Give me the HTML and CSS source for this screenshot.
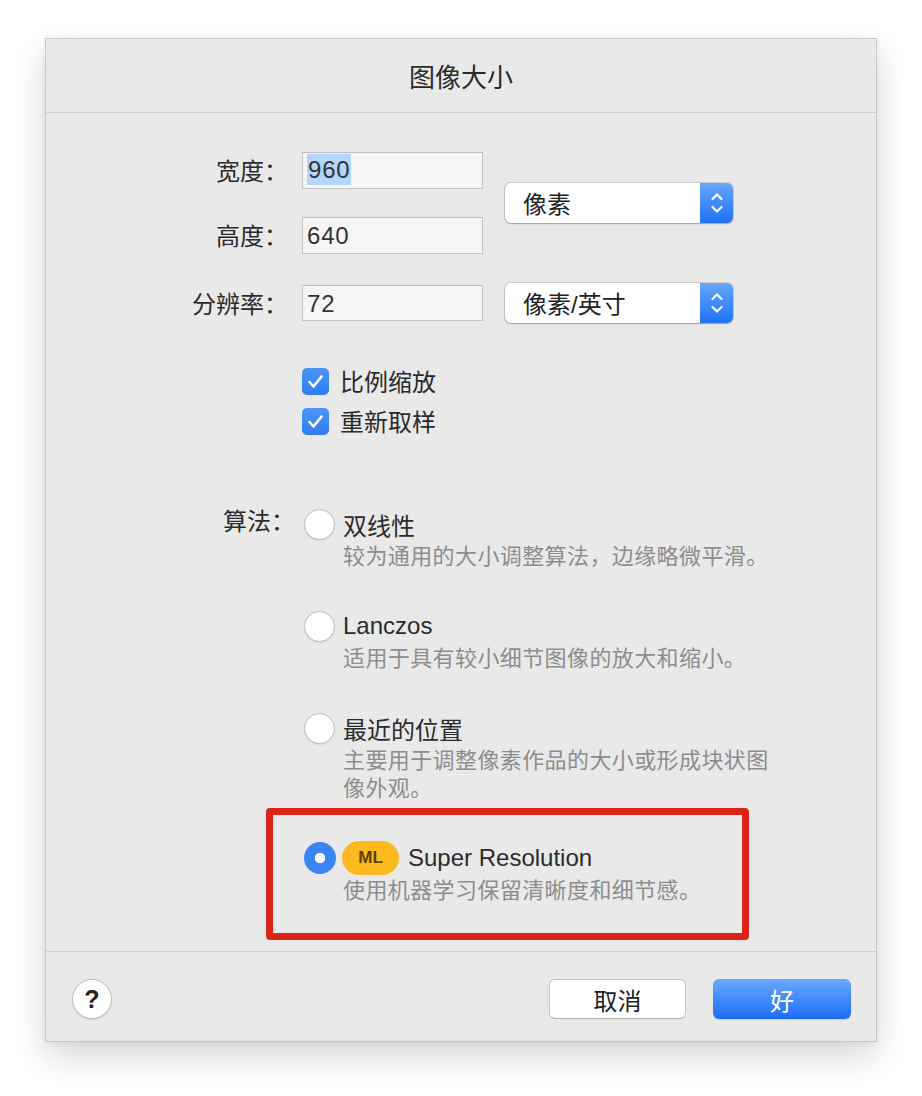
FILE: index.html
```html
<!DOCTYPE html>
<html lang="zh-CN">
<head>
<meta charset="utf-8">
<title>图像大小</title>
<link rel="stylesheet" href="styles.css">
</head>
<body>
<div class="dialog">
  <div class="titlebar">图像大小</div>
  <div class="content">
    <div class="size-grid">
      <div class="label">宽度：</div>
      <div class="field"><span class="sel">960</span></div>
      <div class="popup popup-span">
        <span class="popup-text">像素</span>
        <span class="popup-arrows"><svg width="12" height="22" viewBox="0 0 12 22"><polyline points="1.5,7 6,2.5 10.5,7" /><polyline points="1.5,15 6,19.5 10.5,15" /></svg></span>
      </div>
      <div class="label">高度：</div>
      <div class="field">640</div>
    </div>
    <div class="res-grid">
      <div class="label">分辨率：</div>
      <div class="field">72</div>
      <div class="popup">
        <span class="popup-text">像素/英寸</span>
        <span class="popup-arrows"><svg width="12" height="22" viewBox="0 0 12 22"><polyline points="1.5,7 6,2.5 10.5,7" /><polyline points="1.5,15 6,19.5 10.5,15" /></svg></span>
      </div>
    </div>
    <div class="checks">
      <div class="check-row">
        <span class="checkbox"><svg width="17" height="15" viewBox="0 0 17 15"><polyline points="2.5,8 6.5,12.5 14.5,2.5" /></svg></span>
        <span>比例缩放</span>
      </div>
      <div class="check-row">
        <span class="checkbox"><svg width="17" height="15" viewBox="0 0 17 15"><polyline points="2.5,8 6.5,12.5 14.5,2.5" /></svg></span>
        <span>重新取样</span>
      </div>
    </div>
    <div class="algo">
      <div class="label algo-label">算法：</div>
      <div class="options">
        <div class="option">
          <div class="opt-title"><span class="radio"></span><span>双线性</span></div>
          <div class="opt-desc">较为通用的大小调整算法，边缘略微平滑。</div>
        </div>
        <div class="option">
          <div class="opt-title"><span class="radio"></span><span>Lanczos</span></div>
          <div class="opt-desc">适用于具有较小细节图像的放大和缩小。</div>
        </div>
        <div class="option">
          <div class="opt-title"><span class="radio"></span><span>最近的位置</span></div>
          <div class="opt-desc">主要用于调整像素作品的大小或形成块状图像外观。</div>
        </div>
        <div class="option option-ml">
          <div class="opt-title"><span class="radio radio-on"></span><span class="badge">ML</span><span class="ml-name">Super Resolution</span></div>
          <div class="opt-desc">使用机器学习保留清晰度和细节感。</div>
          <div class="highlight"></div>
        </div>
      </div>
    </div>
  </div>
  <div class="footer">
    <div class="help">?</div>
    <div class="buttons">
      <div class="btn btn-cancel">取消</div>
      <div class="btn btn-ok">好</div>
    </div>
  </div>
</div>
</body>
</html>
```
FILE: styles.css
```css
* { box-sizing: border-box; }
html, body { margin: 0; padding: 0; background: #ffffff; }
body {
  font-family: "Liberation Sans", "Noto Sans CJK SC", sans-serif;
  color: #2b2b2b;
  width: 922px;
  height: 1096px;
  overflow: hidden;
}
.dialog {
  margin: 38px 0 0 45px;
  width: 832px;
  background: #e9e9e9;
  border: 1px solid #c8c8c8;
  box-shadow: 0 14px 32px rgba(0,0,0,0.16), 0 2px 6px rgba(0,0,0,0.06);
}
.titlebar {
  height: 74px;
  border-bottom: 1px solid #d2d2d2;
  display: flex;
  align-items: center;
  justify-content: center;
  font-size: 26px;
  color: #2b2b2b;
}
.content {
  padding-top: 39px;
  padding-bottom: 46px;
}
.label {
  font-size: 24px;
  text-align: right;
  padding-right: 14px;
  color: #2b2b2b;
  white-space: nowrap;
  margin-top: -2px;
}
.size-grid {
  display: grid;
  grid-template-columns: 256px 202px 228px;
  grid-template-rows: 37px 37px;
  row-gap: 28px;
  align-items: center;
}
.res-grid {
  margin-top: 29px;
  display: grid;
  grid-template-columns: 256px 202px 228px;
  grid-template-rows: 40px;
  align-items: center;
}
.field {
  width: 181px;
  height: 37px;
  background: #f5f5f5;
  border: 1px solid #c6c6c6;
  border-top-color: #bdbdbd;
  font-size: 24px;
  line-height: 35px;
  padding-left: 4px;
  color: #333;
  letter-spacing: 0.8px;
}
.res-grid .field { height: 36px; line-height: 36px; }
.sel {
  display: inline-block;
  background: #b3d6fe;
  line-height: 31px;
  margin-top: 1px;
  padding: 0 1px;
  vertical-align: top;
}
.popup {
  grid-column: 3;
  height: 40px;
  width: 228px;
  margin-left: 1px;
  background: #ffffff;
  border-radius: 6px;
  box-shadow: 0 0 0 1px rgba(0,0,0,0.13), 0 1px 1.5px rgba(0,0,0,0.22);
  display: flex;
  align-items: center;
  justify-content: space-between;
  overflow: hidden;
}
.popup-span { grid-row: 1 / span 2; }
.popup-text {
  font-size: 24px;
  padding-left: 18px;
  color: #222;
  margin-top: -2px;
}
.popup-arrows {
  width: 33px;
  height: 40px;
  background: linear-gradient(#66a6fb, #1f72f4);
  display: flex;
  align-items: center;
  justify-content: center;
}
.popup-arrows polyline {
  fill: none;
  stroke: #fff;
  stroke-width: 2.2;
  stroke-linecap: round;
  stroke-linejoin: round;
}
.checks {
  margin-top: 45px;
  padding-left: 256px;
  display: flex;
  flex-direction: column;
  gap: 13px;
}
.check-row {
  display: flex;
  align-items: center;
  height: 27px;
  gap: 11px;
  font-size: 24px;
  color: #2b2b2b;
}
.check-row span:last-child { margin-top: -2px; }
.checkbox {
  width: 27px;
  height: 27px;
  border-radius: 5px;
  background: linear-gradient(#4c94f8, #2f7df1);
  display: flex;
  align-items: center;
  justify-content: center;
}
.checkbox polyline {
  fill: none;
  stroke: #fff;
  stroke-width: 2.6;
  stroke-linecap: round;
  stroke-linejoin: round;
}
.algo {
  margin-top: 73px;
  display: grid;
  grid-template-columns: 256px 1fr;
}
.algo-label {
  line-height: 32px;
  padding-right: 7px;
}
.options {
  padding-left: 2px;
  display: flex;
  flex-direction: column;
  gap: 39px;
}
.option { position: relative; }
.opt-title {
  display: flex;
  align-items: center;
  height: 32px;
  gap: 8px;
  font-size: 24px;
  color: #2b2b2b;
}
.radio {
  width: 31px;
  height: 31px;
  border-radius: 50%;
  background: #ffffff;
  border: 1px solid #bdbdbd;
  box-shadow: 0 1px 1px rgba(0,0,0,0.08);
  flex: none;
}
.radio-on {
  width: 32px;
  height: 32px;
  border: none;
  background: radial-gradient(circle, #ffffff 0 5px, #3b85f2 5.5px);
  box-shadow: none;
}
.badge {
  width: 57px;
  height: 34px;
  border-radius: 17px;
  background: #fbb91e;
  color: #5e3f00;
  font-size: 17px;
  font-weight: bold;
  display: flex;
  align-items: center;
  justify-content: center;
  margin-left: -2px;
}
.ml-name { margin-left: 1px; }
.opt-desc {
  margin-top: 3px;
  padding-left: 39px;
  width: 478px;
  font-size: 22px;
  letter-spacing: 0.4px;
  line-height: 28px;
  color: #8d8d8d;
}
.highlight {
  position: absolute;
  left: -38px;
  top: -34px;
  width: 483px;
  height: 132px;
  border: 7px solid #da241a;
  border-radius: 4px;
}
.footer {
  border-top: 1px solid #d2d2d2;
  height: 90px;
  padding: 27px 25px 0 26px;
  display: flex;
  justify-content: space-between;
  align-items: flex-start;
}
.help {
  width: 40px;
  height: 40px;
  border-radius: 50%;
  background: #ffffff;
  border: 1px solid #bcbcbc;
  box-shadow: 0 1px 1px rgba(0,0,0,0.1);
  display: flex;
  align-items: center;
  justify-content: center;
  font-size: 25px;
  font-weight: bold;
  color: #222;
}
.buttons {
  display: flex;
  gap: 27px;
}
.btn {
  width: 137px;
  height: 40px;
  border-radius: 6px;
  display: flex;
  align-items: center;
  justify-content: center;
  font-size: 24px;
}
.btn-cancel {
  background: #ffffff;
  border: 1px solid #c6c6c6;
  border-bottom-color: #b0b0b0;
  color: #222;
}
.btn-ok {
  width: 138px;
  background: linear-gradient(#6aa9fd, #1a6ef5);
  color: #ffffff;
  box-shadow: 0 1px 1px rgba(0,0,0,0.12);
}
```
